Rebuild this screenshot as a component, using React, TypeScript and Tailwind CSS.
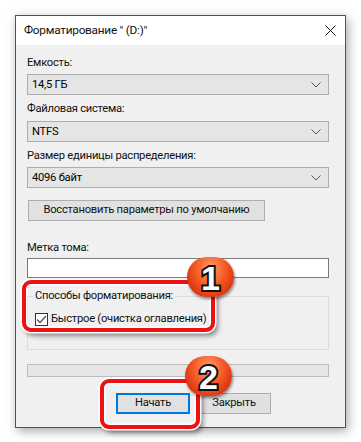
import React from "react";

const font = { fontFamily: 'Roboto, "Noto Sans", sans-serif' };

function Chevron() {
  return (
    <svg width="10" height="6" viewBox="0 0 10 6" className="shrink-0">
      <polyline points="0.5,0.5 5,5 9.5,0.5" fill="none" stroke="#555" strokeWidth="1" />
    </svg>
  );
}

function Combo({ value }: { value: string }) {
  return (
    <div className="h-[21px] w-[302px] border border-[#adadad] bg-[#e5e5e5] flex items-center justify-between pl-[4px] pr-[7px]">
      <span className="leading-none text-black">{value}</span>
      <Chevron />
    </div>
  );
}

function Badge({ n }: { n: string }) {
  return (
    <div className="w-[47px] h-[40px] rounded-full bg-[radial-gradient(ellipse_at_50%_30%,#ff9e6e_0%,#f65a24_45%,#d8300e_80%,#a81c06_100%)] shadow-[1px_2px_3px_rgba(0,0,0,0.45)] flex items-center justify-center">
      <span
        className="text-[34px] font-bold leading-none text-white tracking-normal [paint-order:stroke_fill] [-webkit-text-stroke:4px_#111] mt-[1px]"
        style={{ fontFamily: '"Liberation Sans", Arial, sans-serif' }}
      >
        {n}
      </span>
    </div>
  );
}

export default function App() {
  return (
    <div className="w-[361px] h-[442px] bg-white relative overflow-hidden whitespace-nowrap text-[11.2px] tracking-[-0.25px] text-[#111]" style={font}>
      <div className="absolute left-[15px] top-[15px] w-[331px] h-[413px] border border-[#c2185b] bg-[#f0f0f0] shadow-[2px_3px_10px_rgba(0,0,0,0.35)] flex flex-col">
        {/* title bar */}
        <div className="h-[29px] bg-white flex items-center justify-between pl-[8px] pr-[9px] shrink-0">
          <span className="leading-none text-[11.8px]">Форматирование " (D:)"</span>
          <svg width="11" height="11" viewBox="0 0 11 11">
            <path d="M0.5 0.5 L10.5 10.5 M10.5 0.5 L0.5 10.5" stroke="#111" strokeWidth="1" />
          </svg>
        </div>
        {/* body */}
        <div className="flex flex-col pl-[11px]">
          <div className="mt-[10px] leading-[16px]">Емкость:</div>
          <div className="mt-[3px]"><Combo value="14,5 ГБ" /></div>
          <div className="mt-[6px] leading-[16px]">Файловая система:</div>
          <div className="mt-[4px]"><Combo value="NTFS" /></div>
          <div className="mt-[6px] leading-[16px]">Размер единицы распределения:</div>
          <div className="mt-[3px]"><Combo value="4096 байт" /></div>
          <div className="mt-[12px] ml-[1px] h-[21px] w-[237px] border border-[#adadad] bg-[#e1e1e1] flex items-center justify-center">
            Восстановить параметры по умолчанию
          </div>
          <div className="mt-[19px] leading-[16px]">Метка тома:</div>
          <div className="mt-[2px] h-[20px] w-[302px] border border-[#7a7a7a] bg-white" />
          {/* group box */}
          <div className="mt-[10px] relative w-[302px] h-[62px]">
            <div className="absolute left-0 right-0 top-[8px] bottom-0 border border-[#dcdcdc]" />
            <div className="absolute left-[6px] top-0 bg-[#f0f0f0] px-[2px] leading-[16px]">Способы форматирования:</div>
            <div className="absolute left-[8px] top-[23px] flex items-center gap-[3px]">
              <div className="w-[13px] h-[13px] border border-[#333] bg-white flex items-center justify-center">
                <svg width="11" height="9" viewBox="0 0 11 9">
                  <polyline points="1,4.5 4,7.5 10,1" fill="none" stroke="#555" strokeWidth="1.3" />
                </svg>
              </div>
              <span className="leading-[16px]">Быстрое (очистка оглавления)</span>
            </div>
          </div>
          {/* progress */}
          <div className="mt-[14px] h-[13px] w-[302px] border border-[#bcbcbc] bg-[#e6e6e6]" />
          {/* buttons */}
          <div className="mt-[16px] flex gap-[7px] ml-[89px]">
            <div className="h-[21px] w-[74px] border-2 border-[#0078d7] bg-[#e1e1e1] flex items-center justify-center">Начать</div>
            <div className="h-[21px] w-[74px] border border-[#adadad] bg-[#e1e1e1] flex items-center justify-center">Закрыть</div>
          </div>
        </div>
      </div>

      {/* red highlight 1 */}
      <div className="absolute left-[22px] top-[280px] w-[193px] h-[52px] rounded-[9px] border-[4px] border-[#ee1111] shadow-[0_0_0_1.5px_white,inset_0_0_0_1.5px_white,3px_4px_5px_rgba(0,0,0,0.45)]" />
      {/* red highlight 2 */}
      <div className="absolute left-[100px] top-[379px] w-[100px] h-[50px] rounded-[9px] border-[4px] border-[#ee1111] shadow-[0_0_0_1.5px_white,inset_0_0_0_1.5px_white,3px_4px_5px_rgba(0,0,0,0.45)]" />

      <div className="absolute left-[187px] top-[257px]"><Badge n="1" /></div>
      <div className="absolute left-[185px] top-[356px]"><Badge n="2" /></div>
    </div>
  );
}
